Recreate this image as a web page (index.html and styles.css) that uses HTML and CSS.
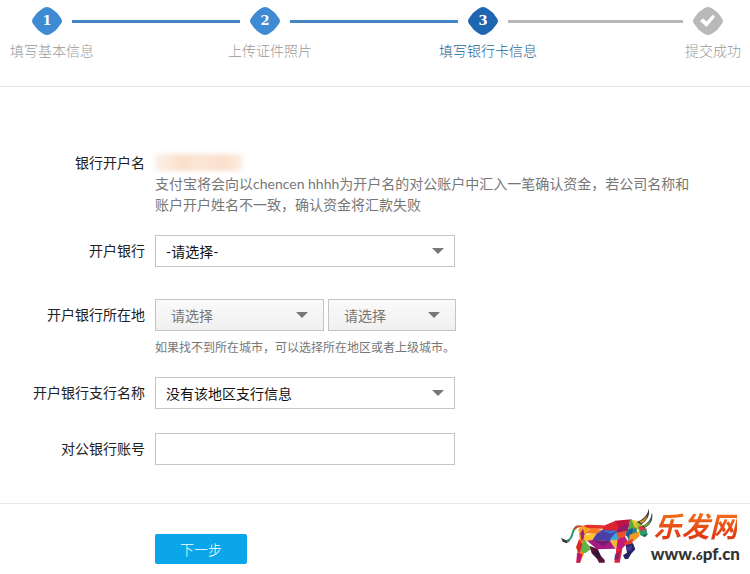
FILE: index.html
```html
<!DOCTYPE html>
<html lang="zh-CN">
    <head>
        <meta charset="UTF-8">
        <title>填写银行卡信息</title>
        <link rel="stylesheet" href="styles.css">
    </head>
    <body>
        <!-- 步骤条 -->
        <header class="header">
            <ol class="steps">
                <li class="step done">
                    <span class="marker">
                        <svg viewBox="0 0 30 28"><path d="M10 2Q15 -2 20 2Q25 5 28 10Q32 14 28 18Q25 23 20 26Q15 30 10 26Q5 23 2 18Q-2 14 2 10Q5 5 10 2Z"/></svg>
                        <b>1</b>
                    </span>
                    <span class="step-text">填写基本信息</span>
                </li>
                <li class="line done" aria-hidden="true"></li>
                <li class="step done">
                    <span class="marker">
                        <svg viewBox="0 0 30 28"><path d="M10 2Q15 -2 20 2Q25 5 28 10Q32 14 28 18Q25 23 20 26Q15 30 10 26Q5 23 2 18Q-2 14 2 10Q5 5 10 2Z"/></svg>
                        <b>2</b>
                    </span>
                    <span class="step-text">上传证件照片</span>
                </li>
                <li class="line done" aria-hidden="true"></li>
                <li class="step current" aria-current="step">
                    <span class="marker">
                        <svg viewBox="0 0 30 28"><path d="M10 2Q15 -2 20 2Q25 5 28 10Q32 14 28 18Q25 23 20 26Q15 30 10 26Q5 23 2 18Q-2 14 2 10Q5 5 10 2Z"/></svg>
                        <b>3</b>
                    </span>
                    <span class="step-text">填写银行卡信息</span>
                </li>
                <li class="line" aria-hidden="true"></li>
                <li class="step">
                    <span class="marker">
                        <svg viewBox="0 0 30 28">
                            <path d="M10 2Q15 -2 20 2Q25 5 28 10Q32 14 28 18Q25 23 20 26Q15 30 10 26Q5 23 2 18Q-2 14 2 10Q5 5 10 2Z"/>
                            <path class="check" d="M7 14L10 11.500L13.500 14.500L20 7.500L22 10L13.500 20Z"/>
                        </svg>
                    </span>
                    <span class="step-text">提交成功</span>
                </li>
            </ol>
        </header>

        <form>
            <!-- 银行信息 -->
            <div class="fields">
                <div class="row name-row">
                    <span class="label">银行开户名</span>
                    <div class="field">
                        <div class="account-name"></div>
                        <p class="desc">支付宝将会向以chencen hhhh为开户名的对公账户中汇入一笔确认资金，若公司名称和账户开户姓名不一致，确认资金将汇款失败</p>
                    </div>
                </div>
                <div class="row bank-row">
                    <label class="label" for="bank">开户银行</label>
                    <div class="field">
                        <div class="select-box">
                            <select id="bank"><option>-请选择-</option></select>
                            <svg class="arrow" viewBox="0 0 12 6"><path d="M0 0H12L6 6Z"/></svg>
                        </div>
                    </div>
                </div>
                <div class="row area-row">
                    <label class="label" for="province">开户银行所在地</label>
                    <div class="field">
                        <div class="area">
                            <div class="select-box gray province">
                                <select id="province"><option>请选择</option></select>
                                <svg class="arrow" viewBox="0 0 12 6"><path d="M0 0H12L6 6Z"/></svg>
                            </div>
                            <div class="select-box gray city">
                                <select id="city" aria-label="城市"><option>请选择</option></select>
                                <svg class="arrow" viewBox="0 0 12 6"><path d="M0 0H12L6 6Z"/></svg>
                            </div>
                        </div>
                        <p class="hint">如果找不到所在城市，可以选择所在地区或者上级城市。</p>
                    </div>
                </div>
                <div class="row branch-row">
                    <label class="label" for="branch">开户银行支行名称</label>
                    <div class="field">
                        <div class="select-box">
                            <select id="branch"><option>没有该地区支行信息</option></select>
                            <svg class="arrow" viewBox="0 0 12 6"><path d="M0 0H12L6 6Z"/></svg>
                        </div>
                    </div>
                </div>
                <div class="row">
                    <label class="label" for="account">对公银行账号</label>
                    <div class="field">
                        <input type="text" class="text-input" id="account">
                    </div>
                </div>
            </div>

            <!-- 底部按钮和标志 -->
            <div class="footer">
                <button type="submit" class="next-btn">下一步</button>
                <div class="logo">
                    <svg class="bull" viewBox="0 12 300 192">
                        <!-- 尾巴 -->
                        <path d="M12 114L28 121L40 117L38 124L28 130L17 125Z" fill="#3c3a40"/>
                        <path d="M30 123Q42 119 46 103Q50 84 62 78" fill="none" stroke="#2c9a72" stroke-width="6"/>
                        <path d="M52 88Q60 75 76 80" fill="none" stroke="#e0412d" stroke-width="6"/>
                        <!-- 后腿 -->
                        <path d="M66 92L88 118L86 148L70 188H58L62 158L57 140L68 116Z" fill="#f28c1e"/>
                        <path d="M66 118L78 136L66 162L58 142Z" fill="#d8262c"/>
                        <path d="M60 158L76 162L69 188H58Z" fill="#c4166f"/>
                        <path d="M80 118L104 146L84 160L70 154Z" fill="#62b246"/>
                        <path d="M98 138L122 146L132 168L143 180V188H126L121 178L104 160Z" fill="#5b1238"/>
                        <path d="M108 158L120 150L132 170L126 178Z" fill="#2b1a3d"/>
                        <!-- 身体 -->
                        <path d="M64 88L76 78L100 84L84 108L70 114Z" fill="#f7a51d"/>
                        <path d="M76 78L90 74L140 76L136 86L100 86Z" fill="#e4312b"/>
                        <path d="M70 100L78 86L84 108L74 124Z" fill="#9d1f83"/>
                        <path d="M84 100L104 84L138 90L120 102Z" fill="#f57d20"/>
                        <path d="M80 106L120 100L104 122L84 124Z" fill="#ffc22a"/>
                        <path d="M118 102L140 88L186 92L176 104L160 124L106 120Z" fill="#4b3fa5"/>
                        <path d="M136 90L184 92L160 102Z" fill="#2f77d1"/>
                        <path d="M90 122L108 120L160 124L176 146L120 148Z" fill="#a51b82"/>
                        <path d="M106 120L160 124L138 138Z" fill="#761b72"/>
                        <path d="M138 78L176 62L190 70L184 92L136 90Z" fill="#dc2530"/>
                        <path d="M174 62L224 58L214 70L186 84Z" fill="#c3133c"/>
                        <path d="M186 82L220 66L212 92L190 102L176 98Z" fill="#951b68"/>
                        <path d="M158 118L178 96L188 108L180 126Z" fill="#3aa7d8"/>
                        <path d="M178 98L210 92L204 112L186 116Z" fill="#ef5225"/>
                        <path d="M160 122L182 118L178 146L170 140Z" fill="#f8b82c"/>
                        <path d="M182 116L204 110L214 126L194 148L178 146Z" fill="#c11a79"/>
                        <path d="M178 144L196 148L188 188H172L176 164Z" fill="#df2439"/>
                        <path d="M174 164L190 152L184 178L172 180Z" fill="#8b216f"/>
                        <!-- 肩和头 -->
                        <path d="M220 58L232 62L238 82L212 96Z" fill="#57ad3b"/>
                        <path d="M224 60L246 64L258 78L238 92Z" fill="#fac425"/>
                        <path d="M236 70L248 66L260 80L246 94Z" fill="#9aca3c"/>
                        <path d="M206 96L238 82L242 104L216 126Z" fill="#1c8b80"/>
                        <path d="M212 90L228 84L222 112L206 108Z" fill="#2454a0"/>
                        <path d="M218 104L246 94L248 108L230 124L216 126Z" fill="#f39a24"/>
                        <path d="M200 128L228 116L226 132L210 142Z" fill="#e33c2c"/>
                        <path d="M244 80L260 76L270 90L250 100Z" fill="#de374c"/>
                        <path d="M246 94L268 88L272 104L262 111L250 106Z" fill="#2c9b68"/>
                        <path d="M256 104L272 102L264 112Z" fill="#186a5c"/>
                        <!-- 前腿 -->
                        <path d="M206 136L228 130L235 148L222 162L214 176L204 178L198 166L210 158Z" fill="#272262"/>
                        <path d="M208 142L226 134L222 152L210 154Z" fill="#45329a"/>
                        <!-- 牛角 -->
                        <path d="M240 65Q271 54 275 26Q283 53 252 74Z" fill="#383733"/>
                        <path d="M246 64Q264 59 272 44Q268 62 253 70Z" fill="#d69c21"/>
                        <path d="M256 78Q282 67 285 37Q292 71 260 85Z" fill="#2e493d"/>
                        <path d="M258 77Q276 71 282 56Q279 74 262 82Z" fill="#76a83c"/>
                    </svg>
                    <div class="logo-text">
                        <span class="logo-name">乐发网</span>
                        <span class="logo-url">www.<small>6</small>pf.cn</span>
                    </div>
                </div>
            </div>
        </form>
    </body>
</html>
```
FILE: styles.css
```css
*{
    box-sizing: border-box;
}

body{
    margin: 0;
    background: #fff;
    color: #222;
    font-family: Lato, "Noto Sans CJK SC", sans-serif;
    font-size: 14px;
    line-height: 21px;
}

p{
    margin: 0;
}

/* 步骤条 */
.header{
    padding: 7px 17px 25px 22px;
    border-bottom: 1px solid #e2e2e2;
}

.steps{
    display: grid;
    grid-template-columns: 50px 24fr 50px 24fr 50px 25fr 50px;
    margin: 0;
    padding: 0;
    list-style: none;
}

.step{
    display: flex;
    flex-direction: column;
    align-items: center;
    gap: 5px;
    color: #999;
}

.marker{
    display: grid;
    width: 30px;
    height: 28px;
    place-items: center;
    fill: #b9b9b9;
}

.marker svg,
.marker b{
    grid-area: 1/1;
}

.marker b{
    color: #fff;
    font-family: "DejaVu Serif", serif;
    font-size: 13px;
    line-height: 28px;
}

.check{
    fill: #fff;
}

.step-text{
    margin-left: 10px;
    font-weight: 300;
    white-space: nowrap;
}

.line{
    height: 3px;
    margin-top: 13px;
    background: #b5b8b8;
}

.line.done{
    background: #4388c5;
}

.done .marker{
    fill: #3f8bd3;
}

.current .marker{
    fill: #1f66b0;
}

.current .step-text{
    color: #1f6496;
}

/* 表单 */
.fields{
    padding: 65px 50px 38px 0;
    border-bottom: 1px solid #e8e8e8;
}

.row{
    display: grid;
    grid-template-columns: 145px 1fr;
    column-gap: 10px;
}

.label{
    line-height: 32px;
    text-align: right;
}

.name-row .label{
    line-height: 21px;
}

.name-row,
.area-row{
    margin-bottom: 20px;
}

.bank-row{
    margin-bottom: 32px;
}

.branch-row{
    margin-bottom: 24px;
}

/* 户名打码 */
.account-name{
    width: 88px;
    height: 17px;
    margin: 2px 0;
    background: linear-gradient(to right, #fdf0e7, #fae0cd 30%, #fbe5d5 50%, #fae0cd 80%, #fdf0e7);
    filter: blur(2px);
}

.desc{
    color: #777;
}

.hint{
    margin-top: 8px;
    color: #777;
    font-size: 12px;
    line-height: 18px;
}

.select-box{
    display: grid;
    width: 300px;
    align-items: center;
}

.select-box select,
.arrow{
    grid-area: 1/1;
}

.select-box select,
.text-input{
    width: 100%;
    height: 32px;
    padding: 0 10px;
    border: 1px solid #c4c4c4;
    border-radius: 0;
    background: #fff;
    color: #111;
    font: inherit;
}

.select-box select{
    appearance: none;
}

.arrow{
    width: 12px;
    height: 6px;
    margin-right: 11px;
    justify-self: end;
    fill: #777;
    pointer-events: none;
}

.text-input{
    display: block;
    width: 300px;
}

.area{
    display: flex;
    gap: 4px;
}

.province{
    width: 169px;
}

.city{
    width: 128px;
}

.gray select{
    padding: 0 15px;
    background: linear-gradient(#fafafa, #f0f0f0);
    color: #777;
}

.gray .arrow{
    margin-right: 16px;
}

/* 底部 */
.footer{
    display: flex;
    justify-content: space-between;
    align-items: flex-start;
    padding: 0 10px 0 155px;
}

.next-btn{
    width: 92px;
    height: 30px;
    margin-top: 30px;
    padding: 0;
    border: 0;
    border-radius: 2px;
    background: #0ba5ea;
    color: #fff;
    font: inherit;
    font-weight: 300;
}

.logo{
    display: flex;
}

.bull{
    width: 100px;
    height: 64px;
}

.logo-text{
    display: flex;
    flex-direction: column;
    align-items: center;
    margin-left: -6px;
    padding-top: 4px;
}

.logo-name{
    background: linear-gradient(#f47a1c, #dc2a12);
    background-clip: text;
    -webkit-background-clip: text;
    color: transparent;
    font-size: 28px;
    font-style: italic;
    font-weight: 700;
    line-height: 36px;
}

.logo-url{
    color: #333;
    font-family: Lato, sans-serif;
    font-size: 17px;
    font-weight: 900;
    line-height: 20px;
}

.logo-url small{
    font-size: 12px;
}
```
